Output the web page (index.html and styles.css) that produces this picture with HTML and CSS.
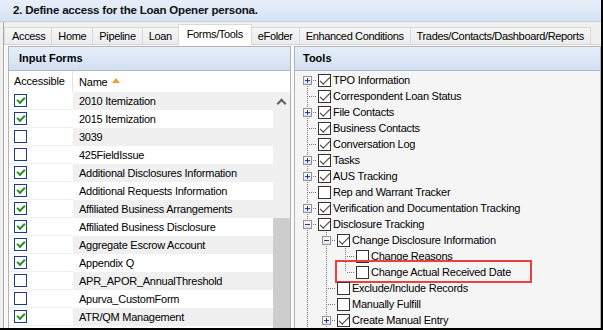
FILE: index.html
```html
<!DOCTYPE html>
<html lang="en">
<head>
  <meta charset="UTF-8" />
  <title>Persona Access</title>
  <link rel="stylesheet" href="styles.css">
</head>
<body>

<div class="window">
  <div class="title">2. Define access for the Loan Opener persona.</div>

  <div class="frame">
    <div class="tabs">
      <div class="tab">Access</div>
      <div class="tab">Home</div>
      <div class="tab">Pipeline</div>
      <div class="tab">Loan</div>
      <div class="tab active">Forms/Tools</div>
      <div class="tab">eFolder</div>
      <div class="tab">Enhanced Conditions</div>
      <div class="tab">Trades/Contacts/Dashboard/Reports</div>
    </div>

    <div class="page">
      <section class="panel forms">
        <div class="panel-head">Input Forms</div>
        <div class="grid-head">
          <div class="col-acc">Accessible</div>
          <div class="col-name">Name <span class="sort"></span></div>
        </div>
        <div class="grid">
          <div class="rows">
            <div class="row"><div class="cell-acc"><span class="box on"></span></div><div class="cell-name">2010 Itemization</div></div>
            <div class="row"><div class="cell-acc"><span class="box on"></span></div><div class="cell-name">2015 Itemization</div></div>
            <div class="row"><div class="cell-acc"><span class="box"></span></div><div class="cell-name">3039</div></div>
            <div class="row"><div class="cell-acc"><span class="box"></span></div><div class="cell-name">425FieldIssue</div></div>
            <div class="row"><div class="cell-acc"><span class="box on"></span></div><div class="cell-name">Additional Disclosures Information</div></div>
            <div class="row"><div class="cell-acc"><span class="box on"></span></div><div class="cell-name">Additional Requests Information</div></div>
            <div class="row"><div class="cell-acc"><span class="box on"></span></div><div class="cell-name">Affiliated Business Arrangements</div></div>
            <div class="row"><div class="cell-acc"><span class="box on"></span></div><div class="cell-name">Affiliated Business Disclosure</div></div>
            <div class="row"><div class="cell-acc"><span class="box on"></span></div><div class="cell-name">Aggregate Escrow Account</div></div>
            <div class="row"><div class="cell-acc"><span class="box on"></span></div><div class="cell-name">Appendix Q</div></div>
            <div class="row"><div class="cell-acc"><span class="box"></span></div><div class="cell-name">APR_APOR_AnnualThreshold</div></div>
            <div class="row"><div class="cell-acc"><span class="box"></span></div><div class="cell-name">Apurva_CustomForm</div></div>
            <div class="row"><div class="cell-acc"><span class="box on"></span></div><div class="cell-name">ATR/QM Management</div></div>
            <div class="row"><div class="cell-acc"><span class="box on"></span></div><div class="cell-name"></div></div>
          </div>
          <div class="scrollbar">
            <div class="arrow"></div>
            <div class="thumb"></div>
          </div>
        </div>
      </section>

      <section class="panel tools">
        <div class="panel-head">Tools</div>
        <div class="tree">
          <div class="node"><span class="j first"><i class="exp plus"></i></span><span class="cb on"></span><span class="lbl">TPO Information</span></div>
          <div class="node"><span class="j tee"></span><span class="cb on"></span><span class="lbl">Correspondent Loan Status</span></div>
          <div class="node"><span class="j tee"><i class="exp plus"></i></span><span class="cb on"></span><span class="lbl">File Contacts</span></div>
          <div class="node"><span class="j tee"></span><span class="cb on"></span><span class="lbl">Business Contacts</span></div>
          <div class="node"><span class="j tee"></span><span class="cb on"></span><span class="lbl">Conversation Log</span></div>
          <div class="node"><span class="j tee"><i class="exp plus"></i></span><span class="cb on"></span><span class="lbl">Tasks</span></div>
          <div class="node"><span class="j tee"><i class="exp plus"></i></span><span class="cb on"></span><span class="lbl">AUS Tracking</span></div>
          <div class="node"><span class="j tee"></span><span class="cb"></span><span class="lbl">Rep and Warrant Tracker</span></div>
          <div class="node"><span class="j tee"><i class="exp plus"></i></span><span class="cb on"></span><span class="lbl">Verification and Documentation Tracking</span></div>
          <div class="node"><span class="j tee"><i class="exp minus"></i></span><span class="cb on"></span><span class="lbl">Disclosure Tracking</span></div>
          <div class="node"><span class="j line"></span><span class="j tee"><i class="exp minus"></i></span><span class="cb on"></span><span class="lbl">Change Disclosure Information</span></div>
          <div class="node"><span class="j line"></span><span class="j line"></span><span class="j tee"></span><span class="cb"></span><span class="lbl">Change Reasons</span></div>
          <div class="node"><span class="j line"></span><span class="j line"></span><span class="j elbow"></span><span class="cb"></span><span class="lbl">Change Actual Received Date</span><span class="callout"></span></div>
          <div class="node"><span class="j line"></span><span class="j tee"></span><span class="cb"></span><span class="lbl">Exclude/Include Records</span></div>
          <div class="node"><span class="j line"></span><span class="j tee"></span><span class="cb"></span><span class="lbl">Manually Fulfill</span></div>
          <div class="node"><span class="j line"></span><span class="j tee"><i class="exp plus"></i></span><span class="cb on"></span><span class="lbl">Create Manual Entry</span></div>
        </div>
      </section>
    </div>
  </div>
</div>

</body>
</html>
```

FILE: styles.css
```css
* {
  box-sizing: border-box;
}

body {
  margin: 0;
  font-family: "Liberation Sans", Arial, sans-serif;
  font-size: 11px;
  color: #000;
  overflow: hidden;
}

.window {
  width: 603px;
  height: 330px;
  border-right: 2px solid #000;
  border-bottom: 2px solid #000;
  background: #f0f0f0;
  display: flex;
  flex-direction: column;
  overflow: hidden;
}

.title {
  height: 22px;
  flex: none;
  padding-left: 13px;
  line-height: 21px;
  font-size: 11.5px;
  font-weight: bold;
  letter-spacing: -0.2px;
  color: #111;
  background: linear-gradient(#e8eff9, #d6e3f5);
  border-bottom: 1px solid #c3cedd;
}

.frame {
  flex: 1;
  min-height: 0;
  margin-left: 3px;
  border-left: 1px solid #a9a9a9;
  display: flex;
  flex-direction: column;
}

/* tab strip */
.tabs {
  height: 23px;
  flex: none;
  display: flex;
  align-items: flex-end;
  padding-top: 2px;
  border-bottom: 1px solid #d4d4d4;
  white-space: nowrap;
  letter-spacing: -0.35px;
}

.tab {
  height: 17px;
  line-height: 16px;
  padding: 0 6px;
  border-top: 1px solid #d9d9d9;
  border-right: 1px solid #d9d9d9;
  background: linear-gradient(#f6f6f6, #ececec);
}

.tab:first-child {
  border-left: 1px solid #d9d9d9;
  padding-left: 7px;
}

.tab.active {
  height: 21px;
  line-height: 18px;
  margin-bottom: -1px;
  margin-left: -1px;
  padding: 0 8px;
  border-left: 1px solid #d9d9d9;
  background: #fff;
}

.page {
  flex: 1;
  min-height: 0;
  display: flex;
  gap: 3px;
  padding: 1px 0 0 4px;
  background: #f9f9f9;
}

.panel {
  border: 1px solid #b4b4b4;
  border-bottom: none;
  display: flex;
  flex-direction: column;
  min-height: 0;
  overflow: hidden;
}

.forms {
  width: 283px;
  flex: none;
}

.tools {
  flex: 1;
}

.panel-head {
  height: 24px;
  flex: none;
  line-height: 23px;
  padding-left: 10px;
  font-weight: bold;
  background: linear-gradient(#e6eefa, #d2dff1);
  border-bottom: 1px solid #aabbd3;
}

.tools .panel-head {
  padding-left: 8px;
}

/* input forms grid */
.grid-head {
  height: 21px;
  flex: none;
  display: flex;
  line-height: 20px;
  background: #fff;
  letter-spacing: -0.2px;
}

.col-acc {
  width: 64px;
  padding-left: 5px;
  border-right: 1px solid #e3e3e3;
}

.col-name {
  padding-left: 6px;
  display: flex;
  align-items: center;
  gap: 4px;
}

.sort {
  width: 0;
  height: 0;
  border-left: 4px solid transparent;
  border-right: 4px solid transparent;
  border-bottom: 5px solid #f0a131;
  margin-top: -2px;
}

.grid {
  flex: 1;
  min-height: 0;
  display: flex;
}

.rows {
  width: 264px;
  background: #fff;
}

.row {
  display: flex;
  height: 18px;
}

.cell-acc {
  width: 64px;
  padding-left: 5px;
  display: flex;
  align-items: center;
  border-bottom: 1px solid #f0f0f0;
}

.cell-name {
  flex: 1;
  padding-left: 6px;
  line-height: 18px;
  letter-spacing: -0.25px;
  white-space: nowrap;
  overflow: hidden;
}

.row:nth-child(odd) .cell-name {
  background: #f0f0f0;
}

.box {
  width: 13px;
  height: 13px;
  border: 1px solid #1c3b8f;
  background: #fff;
  position: relative;
}

.box.on::after {
  content: "";
  position: absolute;
  left: 2px;
  top: 2px;
  width: 6px;
  height: 3px;
  border-left: 2px solid #1f8f1f;
  border-bottom: 2px solid #1f8f1f;
  transform: rotate(-45deg);
}

.scrollbar {
  width: 17px;
  flex: none;
  background: #f0f0f0;
  display: flex;
  flex-direction: column;
}

.arrow {
  height: 17px;
  flex: none;
  display: flex;
  justify-content: center;
  padding-top: 8px;
}

.arrow::before {
  content: "";
  width: 5px;
  height: 5px;
  border-left: 2px solid #606060;
  border-top: 2px solid #606060;
  transform: rotate(45deg);
}

.thumb {
  flex: 1;
  margin-top: 109px;
  background: #cdcdcd;
}

/* tools tree */
.tree {
  flex: 1;
  padding: 1px 0 0 3px;
  background: #f5f5f5;
  white-space: nowrap;
  letter-spacing: -0.25px;
}

.node {
  height: 16px;
  display: flex;
  align-items: center;
  position: relative;
}

.j {
  width: 19px;
  height: 16px;
  flex: none;
  position: relative;
  display: flex;
  align-items: center;
  justify-content: center;
}

.j::before,
.j::after {
  content: "";
  position: absolute;
}

.j::before {
  left: 9px;
  top: 0;
  bottom: 0;
  width: 1px;
  background: repeating-linear-gradient(to bottom, #7a7a7a 0 1px, transparent 1px 2px);
}

.j::after {
  left: 10px;
  right: 0;
  top: 8px;
  height: 1px;
  background: repeating-linear-gradient(to right, transparent 0 1px, #7a7a7a 1px 2px);
}

.j.first::before {
  top: 8px;
}

.j.elbow::before {
  bottom: 8px;
}

.j.line::after {
  display: none;
}

.exp {
  width: 9px;
  height: 9px;
  border: 1px solid #929292;
  background: linear-gradient(#fff, #e4e4e4);
  position: relative;
  z-index: 1;
  display: flex;
  align-items: center;
  justify-content: center;
}

.exp::before {
  content: "";
  width: 5px;
  height: 1px;
  background: #1d3d8e;
}

.exp.plus::after {
  content: "";
  position: absolute;
  left: 3px;
  top: 1px;
  width: 1px;
  height: 5px;
  background: #1d3d8e;
}

.cb {
  width: 13px;
  height: 13px;
  flex: none;
  margin-left: 1px;
  border: 1px solid #333;
  background: #fff;
  position: relative;
}

.cb.on::after {
  content: "";
  position: absolute;
  left: 1px;
  top: 2px;
  width: 9px;
  height: 4px;
  border-left: 1px solid #3a3a3a;
  border-bottom: 1px solid #3a3a3a;
  transform: rotate(-45deg);
}

.lbl {
  margin-left: 2px;
  line-height: 16px;
}

.callout {
  position: absolute;
  left: 37px;
  top: -4px;
  width: 197px;
  height: 23px;
  border: 2px solid #e8423d;
}
```
